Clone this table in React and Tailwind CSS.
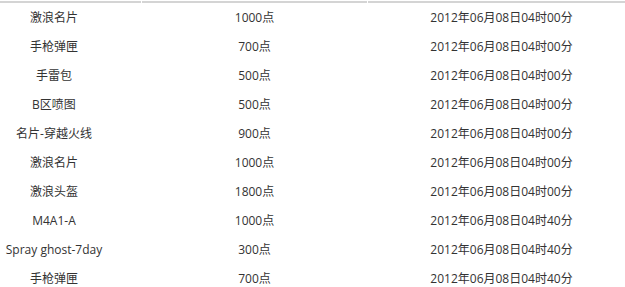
const rows = [
  ["激浪名片", "1000点", "2012年06月08日04时00分"],
  ["手枪弹匣", "700点", "2012年06月08日04时00分"],
  ["手雷包", "500点", "2012年06月08日04时00分"],
  ["B区喷图", "500点", "2012年06月08日04时00分"],
  ["名片-穿越火线", "900点", "2012年06月08日04时00分"],
  ["激浪名片", "1000点", "2012年06月08日04时00分"],
  ["激浪头盔", "1800点", "2012年06月08日04时00分"],
  ["M4A1-A", "1000点", "2012年06月08日04时40分"],
  ["Spray ghost-7day", "300点", "2012年06月08日04时40分"],
  ["手枪弹匣", "700点", "2012年06月08日04时40分"],
];

export default function App() {
  return (
    <div
      className="w-[625px] h-[287px] overflow-hidden bg-white pt-px text-[12px] text-[#333]"
      style={{ fontFamily: '"Open Sans", "Noto Sans CJK SC", sans-serif' }}
    >
      {/* top border segments */}
      <div className="flex gap-px">
        <div className="w-[141px] h-[2px] bg-[#d4d4d4]" />
        <div className="w-[225px] h-[2px] bg-[#d4d4d4]" />
        <div className="flex-1 h-[2px] bg-[#d4d4d4]" />
      </div>

      {rows.map((r, i) => (
        <div key={i} className="flex gap-px h-[29px] items-center w-[620px]">
          <div className="w-[141px] pr-[33px] text-center whitespace-nowrap">{r[0]}</div>
          <div className="w-[225px] text-center">{r[1]}</div>
          <div className="flex-1 pl-[15px] text-center whitespace-nowrap">{r[2]}</div>
        </div>
      ))}
    </div>
  );
}
